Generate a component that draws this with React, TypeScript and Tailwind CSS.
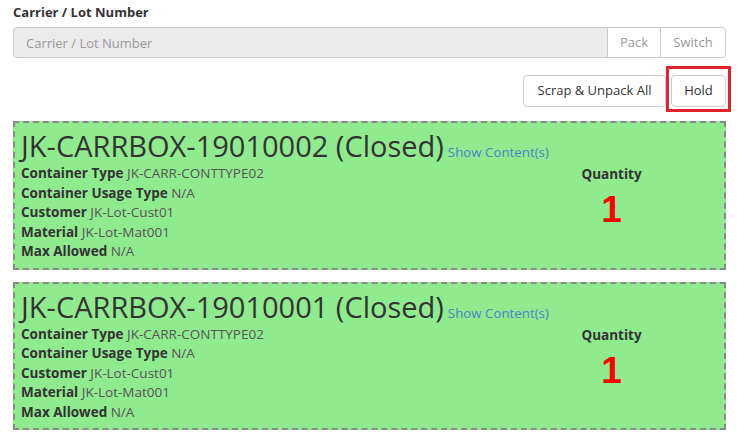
import React from "react";

type Box = {
  id: string;
  status: string;
  containerType: string;
  usageType: string;
  customer: string;
  material: string;
  maxAllowed: string;
  quantity: number;
};

const boxes: Box[] = [
  {
    id: "JK-CARRBOX-19010002",
    status: "Closed",
    containerType: "JK-CARR-CONTTYPE02",
    usageType: "N/A",
    customer: "JK-Lot-Cust01",
    material: "JK-Lot-Mat001",
    maxAllowed: "N/A",
    quantity: 1,
  },
  {
    id: "JK-CARRBOX-19010001",
    status: "Closed",
    containerType: "JK-CARR-CONTTYPE02",
    usageType: "N/A",
    customer: "JK-Lot-Cust01",
    material: "JK-Lot-Mat001",
    maxAllowed: "N/A",
    quantity: 1,
  },
];

function Field({ label, value }: { label: string; value: string }) {
  return (
    <div className="leading-[19.5px]">
      <span className="font-bold text-[#333]">{label}</span>{" "}
      <span className="text-[#555]">{value}</span>
    </div>
  );
}

function BoxCard({ box }: { box: Box }) {
  return (
    <div className="border-2 border-dashed border-[#8a8a8a] bg-[#90ea8e] pb-[6px] pl-[6px] pt-[5px] text-[13.5px]">
      <div className="flex items-baseline whitespace-nowrap">
        <span className="text-[29px] leading-[36px] text-[#333]">
          {box.id} ({box.status})
        </span>
        <span className="ml-[4px] text-[13.3px] text-[#4a84c4]">Show Content(s)</span>
      </div>
      <div className="flex">
        <div className="flex-1">
          <Field label="Container Type" value={box.containerType} />
          <Field label="Container Usage Type" value={box.usageType} />
          <Field label="Customer" value={box.customer} />
          <Field label="Material" value={box.material} />
          <Field label="Max Allowed" value={box.maxAllowed} />
        </div>
        <div className="flex w-[225px] flex-col items-center pt-[1px]">
          <div className="font-bold leading-[19px] text-[#333]">Quantity</div>
          <div className="mt-[6px] font-['Liberation_Sans',Arial,sans-serif] text-[37px] font-bold leading-[40px] text-[#ff0000]">
            {box.quantity}
          </div>
        </div>
      </div>
    </div>
  );
}

export default function App() {
  return (
    <div className="h-[439px] w-[737px] bg-white pl-[13px] pr-[11px] font-['Open_Sans',sans-serif] text-[13px] text-[#333]">
      <div className="pt-[3px] font-bold leading-[18px]">Carrier / Lot Number</div>
      <div className="mt-[6px] flex h-[31px]">
        <input
          className="h-full flex-1 rounded-l-[4px] border border-[#ccc] bg-[#ebebeb] px-[12px] text-[13px] outline-none placeholder:text-[#999]"
          placeholder="Carrier / Lot Number"
          disabled
        />
        <button className="-ml-px h-full w-[54px] border border-[#ccc] bg-white text-[#999]">Pack</button>
        <button className="-ml-px h-full w-[66px] rounded-r-[4px] border border-[#ccc] bg-white text-[#999]">
          Switch
        </button>
      </div>
      <div className="mt-[8px] flex justify-end">
        <div className="-mr-[5px] flex items-start">
          <button className="mt-[9px] h-[32px] w-[143px] rounded-[4px] border border-[#ccc] bg-white text-[#333]">
            Scrap &amp; Unpack All
          </button>
          <div className="border-[3px] border-[#e4222b] px-[2px] pb-[2px] pt-[6px]">
            <button className="h-[32px] w-[55px] rounded-[4px] border border-[#ccc] bg-white text-[#333]">Hold</button>
          </div>
        </div>
      </div>
      <div className="mt-[9px] flex flex-col gap-[12px]">
        {boxes.map((b) => (
          <BoxCard key={b.id} box={b} />
        ))}
      </div>
    </div>
  );
}
